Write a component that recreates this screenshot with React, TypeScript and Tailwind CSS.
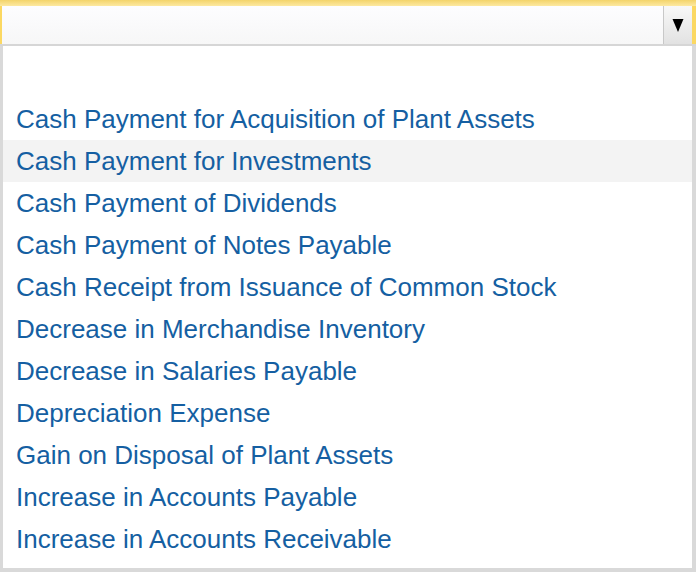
const options = [
  "",
  "Cash Payment for Acquisition of Plant Assets",
  "Cash Payment for Investments",
  "Cash Payment of Dividends",
  "Cash Payment of Notes Payable",
  "Cash Receipt from Issuance of Common Stock",
  "Decrease in Merchandise Inventory",
  "Decrease in Salaries Payable",
  "Depreciation Expense",
  "Gain on Disposal of Plant Assets",
  "Increase in Accounts Payable",
  "Increase in Accounts Receivable",
];

export default function App() {
  const hovered = 2;

  return (
    <div className="w-[696px] h-[572px] bg-white overflow-hidden flex flex-col font-['Liberation_Sans',Arial,sans-serif]">
      {/* Select (focused) */}
      <div className="h-[46px] flex flex-col shrink-0">
        <div className="h-[6px] bg-gradient-to-b from-[#f3d46a] to-[#fde9a0]" />
        <div className="flex-1 flex">
          <div className="w-[2px] bg-[#fbd862]" />
          <div className="flex-1 bg-gradient-to-b from-[#fdfdff] to-[#f7f7f7]" />
          <div className="w-[29px] flex items-center justify-center border-l border-[#c8c8c8] bg-gradient-to-b from-[#f8f8f8] to-[#e2e2e2]">
            <svg width="14" height="16" viewBox="0 0 14 16">
              <polygon points="1.5,2 12.5,2 7,15" fill="#000" />
            </svg>
          </div>
          <div className="w-[4px] bg-[#fbd862]" />
        </div>
        <div className="h-[2px] bg-[#d6d6d6]" />
      </div>

      {/* Option list */}
      <div className="flex-1 flex">
        <div className="flex-1 flex flex-col border-l-[3px] border-r-[4px] border-b-[4px] border-[#d9d9d9] pt-[10px]">
          {options.map((opt, i) => (
            <div
              key={i}
              className={
                "h-[42px] leading-[42px] pl-[13px] text-[26px] text-[#155fa2] whitespace-nowrap " +
                (i === hovered ? "bg-[#f3f3f3]" : "")
              }
            >
              {opt}
            </div>
          ))}
        </div>
      </div>
    </div>
  );
}
